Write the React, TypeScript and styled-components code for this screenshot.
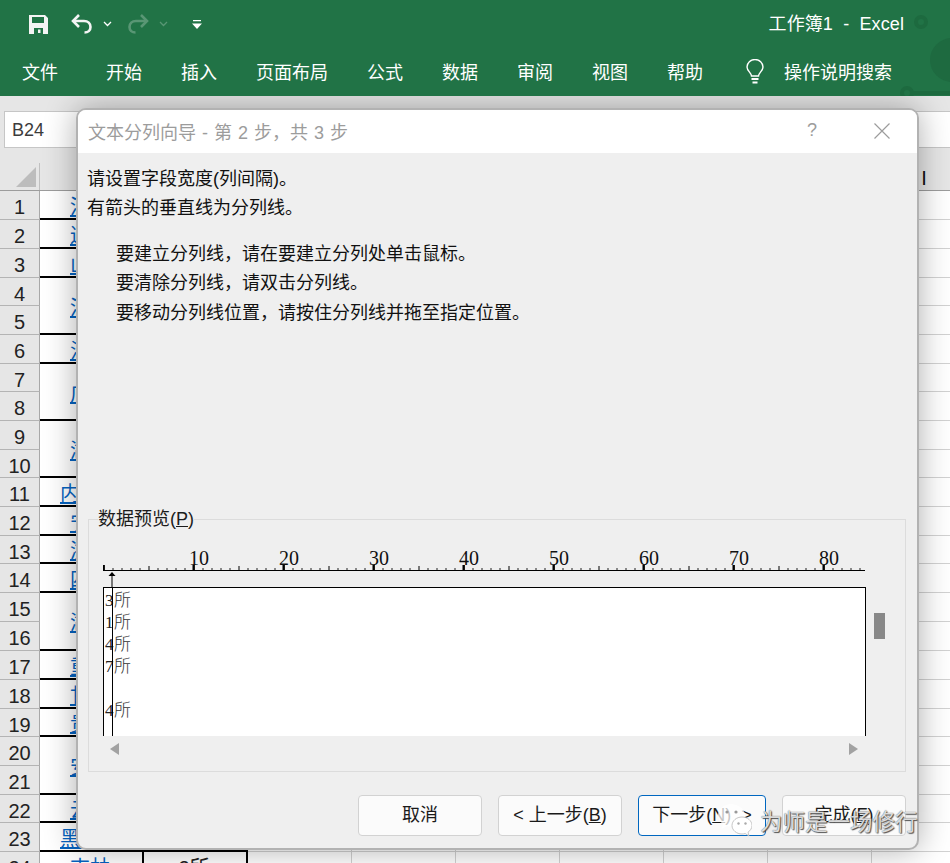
// App.tsx
import React from "react";
import styled, { createGlobalStyle } from "styled-components";

const GlobalStyle = createGlobalStyle`
  html, body {
    margin: 0;
    padding: 0;
    background: #fff;
  }
  * {
    box-sizing: border-box;
  }
`;

const FONT = `"Liberation Sans", "Noto Sans CJK SC", sans-serif`;
const HEAD_BG = "#e6e6e6";

const Page = styled.div`
  position: relative;
  width: 950px;
  height: 863px;
  overflow: hidden;
  font-family: ${FONT};
  background: #fff;
`;

/* ribbon */
const Ribbon = styled.header`
  position: relative;
  z-index: 3;
  height: 96px;
  background: #217346;
  color: #fff;
  overflow: hidden;
`;

const TitleRow = styled.div`
  display: flex;
  align-items: center;
  height: 48px;
  padding-left: 29px;
`;

const QatIcon = styled.svg<{ $left?: number }>`
  display: block;
  flex: none;
  margin-left: ${(p) => p.$left ?? 0}px;
`;

const BookTitle = styled.div`
  margin-left: auto;
  margin-right: 46px;
  padding-bottom: 4px;
  font-size: 18px;
  letter-spacing: 0.1px;
  white-space: pre;
`;

const TabRow = styled.nav`
  display: flex;
  align-items: center;
  gap: 39px;
  height: 48px;
  padding-left: 22px;
  padding-bottom: 2px;
  font-size: 18px;
`;

const Tab = styled.span<{ $extra?: number }>`
  margin-right: ${(p) => p.$extra ?? 0}px;
  white-space: nowrap;
`;

const TellMe = styled.span`
  display: flex;
  align-items: center;
  gap: 20px;
  margin-left: 4px;
  white-space: nowrap;
`;

const RibbonArt = styled.svg`
  position: absolute;
  right: 0;
  top: 0;
  pointer-events: none;
`;

/* formula bar */
const FormulaBar = styled.div`
  display: flex;
  height: 52px;
  padding: 15px 0 0 4px;
  background: ${HEAD_BG};
`;

const NameBox = styled.div`
  width: 100px;
  padding-left: 7px;
  font-size: 18px;
  line-height: 37px;
  color: #3c3c3c;
  background: #fff;
  border: 1px solid #c6c6c6;
`;

const FormulaInput = styled.div`
  flex: 1;
  background: #fff;
  border: 1px solid #c6c6c6;
  border-right: 0;
`;

/* sheet */
const HeaderStrip = styled.div`
  display: flex;
  align-items: flex-end;
  height: 43px;
  background: ${HEAD_BG};
  border-bottom: 1px solid #9c9c9c;
`;

const Corner = styled.div`
  flex: none;
  display: flex;
  align-items: flex-end;
  justify-content: flex-end;
  width: 40px;
  height: 27px;
  padding: 0 3px 3px 0;
  border-right: 1px solid #c0c0c0;

  &::after {
    content: "";
    width: 20px;
    height: 20px;
    background: #bdbdbd;
    clip-path: polygon(100% 0, 100% 100%, 0 100%);
  }
`;

const ColHead = styled.div`
  flex: none;
  width: 104px;
  height: 27px;
  font-size: 20px;
  line-height: 30px;
  text-align: center;
  color: #111;
`;

const Sheet = styled.div<{ $rows: string }>`
  display: grid;
  grid-template-columns: 40px repeat(9, 104px);
  grid-template-rows: ${(p) => p.$rows};
`;

const RowHead = styled.div`
  font-size: 20px;
  text-align: center;
  line-height: 32px;
  color: #222;
  background: ${HEAD_BG};
  border-right: 1px solid #a8a8a8;
  border-bottom: 1px solid #b4b4b4;
`;

const DataCell = styled.div<{ $span: number; $link?: boolean }>`
  grid-row: span ${(p) => p.$span};
  display: flex;
  align-items: center;
  justify-content: center;
  padding: 1px 2px 0 0;
  font-size: 20px;
  color: ${(p) => (p.$link ? "#0563c1" : "#222")};
  text-decoration: ${(p) => (p.$link ? "underline" : "none")};
  border-right: 2px solid #000;
  border-bottom: 2px solid #000;
`;

const Cell = styled.div`
  border-right: 1px solid #d2d2d2;
  border-bottom: 1px solid #d2d2d2;
`;

/* dialog */
const Dialog = styled.section`
  position: absolute;
  z-index: 2;
  left: 76px;
  top: 108px;
  width: 843px;
  height: 742px;
  display: flex;
  flex-direction: column;
  background: #efefef;
  border: 2px solid #b2b2b2;
  border-radius: 10px;
  box-shadow: 0 0 32px rgba(0, 0, 0, 0.32);
  overflow: hidden;
`;

const DialogTitle = styled.div`
  flex: none;
  display: flex;
  align-items: center;
  height: 43px;
  padding: 0 0 2px 10px;
  background: #fff;
  font-size: 18px;
  word-spacing: 1px;
  color: #9c9c9c;
  white-space: pre;
`;

const HelpMark = styled.span`
  margin-left: auto;
  margin-right: 57px;
`;

const CloseIcon = styled.svg`
  margin-right: 27px;
`;

const DialogBody = styled.div`
  flex: 1;
  display: flex;
  flex-direction: column;
  padding: 11.5px 11px 12px 9px;
  font-size: 18px;
  line-height: 29.5px;
  color: #111;
`;

const Line = styled.div``;

const HintList = styled.div`
  margin-top: 16px;
  padding-left: 29px;
`;

const PreviewGroup = styled.fieldset`
  flex: none;
  margin: auto 0 0 1px;
  padding: 0 0 0 14px;
  height: 264px;
  border: 1px solid #dcdcdc;
`;

const PreviewLegend = styled.legend`
  margin-left: -5px;
  padding: 0;
  font-size: 18px;
  line-height: 22px;
  color: #1c1c1c;
`;

const Hot = styled.span`
  text-decoration: underline;
`;

const Ruler = styled.svg`
  display: block;
  margin-top: 18px;
`;

const PreviewRow = styled.div`
  display: flex;
  align-items: flex-start;
`;

const PreviewPane = styled.div`
  position: relative;
  flex: none;
  width: 763px;
  height: 149px;
  padding-top: 2px;
  background: #fff;
  border: 1px solid #000;
  border-bottom: 0;
  overflow: hidden;
`;

const BreakLine = styled.div`
  position: absolute;
  left: 8px;
  top: 0;
  bottom: 0;
  width: 1px;
  background: #000;
`;

const PreviewLine = styled.div`
  display: flex;
  height: 22px;
  padding-left: 1px;
  line-height: 22px;
  color: #222;
`;

const PreviewDigit = styled.span`
  width: 9px;
  font-family: "Liberation Serif", serif;
  font-size: 17px;
`;

const PreviewWord = styled.span`
  font-size: 17px;
  font-weight: 300;
  color: #333;
`;

const VThumb = styled.div`
  flex: none;
  width: 11px;
  height: 26px;
  margin: 26px 0 0 8px;
  background: #888;
`;

const HScroll = styled.div`
  display: flex;
  align-items: center;
  justify-content: space-between;
  width: 763px;
  height: 25px;
  padding: 0 8px 0 7px;
`;

const Footer = styled.div`
  flex: none;
  display: flex;
  justify-content: flex-end;
  gap: 16px;
  margin-top: 23px;
`;

const Btn = styled.div<{ $primary?: boolean; $w?: number }>`
  display: flex;
  align-items: center;
  justify-content: center;
  width: ${(p) => p.$w ?? 124}px;
  height: 41px;
  font-size: 18px;
  color: #1a1a1a;
  white-space: pre;
  background: #fbfbfb;
  border: 1px solid ${(p) => (p.$primary ? "#0067c0" : "#d2d2d2")};
  border-radius: 4px;
`;

/* watermark */
const Watermark = styled.div`
  position: absolute;
  z-index: 4;
  left: 718px;
  top: 802px;
  display: flex;
  align-items: center;
  gap: 8px;
  font-size: 22.5px;
  color: rgba(255, 255, 255, 0.82);
  text-shadow: 0 0 1px #333, 1px 1px 1px #555;
  white-space: nowrap;
`;

const WatermarkIcon = styled.svg`
  flex: none;
  display: block;
`;

const ROW_HEIGHTS = [29, 29, 29, 28, 29, 29, 28, 29, 29, 28, 29, 29, 28, 29, 29, 29, 29, 29, 28, 29, 29, 28, 29, 29];

const REGIONS: { row: number; span: number; name: string; count?: string }[] = [
  { row: 1, span: 1, name: "河北", count: "3所" },
  { row: 2, span: 1, name: "辽宁", count: "1所" },
  { row: 3, span: 1, name: "山东", count: "4所" },
  { row: 4, span: 2, name: "河南", count: "7所" },
  { row: 6, span: 1, name: "江苏", count: "4所" },
  { row: 7, span: 2, name: "广东" },
  { row: 9, span: 2, name: "湖北" },
  { row: 11, span: 1, name: "内蒙古" },
  { row: 12, span: 1, name: "宁夏" },
  { row: 13, span: 1, name: "浙江" },
  { row: 14, span: 1, name: "四川" },
  { row: 15, span: 2, name: "湖南" },
  { row: 17, span: 1, name: "重庆" },
  { row: 18, span: 1, name: "甘肃" },
  { row: 19, span: 1, name: "贵州" },
  { row: 20, span: 2, name: "安徽" },
  { row: 22, span: 1, name: "云南" },
  { row: 23, span: 1, name: "黑龙江" },
  { row: 24, span: 1, name: "吉林", count: "2所" },
];

const TABS = ["开始", "插入", "页面布局", "公式", "数据", "审阅", "视图", "帮助"];
const COLUMNS = ["A", "B", "C", "D", "E", "F", "G", "H", "I"];
const PREVIEW = [
  ["3", "所"],
  ["1", "所"],
  ["4", "所"],
  ["7", "所"],
  ["", ""],
  ["4", "所"],
];

const Chevron = ({ dim, left }: { dim?: boolean; left: number }) => (
  <QatIcon $left={left} width="9" height="6" viewBox="0 0 9 6" opacity={dim ? 0.25 : 1}>
    <path d="M1 1l3.5 3.5L8 1" fill="none" stroke="#fff" strokeWidth="1.3" />
  </QatIcon>
);

const RulerDrawing = () => {
  const ticks = [];
  for (let i = 0; i <= 84; i++) {
    const x = i * 9 + 0.5;
    if (i % 10 === 0) ticks.push(<rect key={i} x={x - 1} y={17} width={2.4} height={5} fill="#000" />);
    else if (i % 5 === 0) ticks.push(<rect key={i} x={x} y={18} width={1} height={4} fill="#000" />);
    else ticks.push(<rect key={i} x={x} y={20} width={1} height={2} fill="#222" />);
  }
  return (
    <Ruler width="764" height="39" viewBox="0 0 764 39">
      {[10, 20, 30, 40, 50, 60, 70, 80].map((n) => (
        <text key={n} x={n * 9 - 4} y={17} fontFamily="Liberation Serif, serif" fontSize="20" fill="#111">
          {n}
        </text>
      ))}
      {ticks}
      <rect x="0" y="22" width="762" height="1" fill="#000" />
      <path d="M9 24l3.5 4h-7z" fill="#000" />
      <rect x="8.5" y="27" width="1" height="12" fill="#000" />
    </Ruler>
  );
};

const App: React.FC = () => {
  return (
    <Page>
      <GlobalStyle />
      <Ribbon>
        <RibbonArt width="60" height="96" viewBox="0 0 60 96">
          <circle cx="31" cy="22" r="5" fill="none" stroke="#1d6a3f" strokeWidth="4" />
          <circle cx="62" cy="60" r="22" fill="#1e6a40" />
          <circle cx="17" cy="93" r="5" fill="none" stroke="#1d6a3f" strokeWidth="4" />
          <path d="M22 93h38" stroke="#1d6a3f" strokeWidth="4" />
        </RibbonArt>
        <TitleRow>
          <QatIcon width="19" height="19" viewBox="0 0 19 19">
            <path
              fillRule="evenodd"
              fill="#f4f4f4"
              d="M0 0h16l3 3v16H0zM3 2v6h12V2zM5 13v6h9v-6zM9 14.5h2.5V18H9z"
            />
          </QatIcon>
          <QatIcon $left={23} width="22" height="20" viewBox="0 0 22 20">
            <path d="M8 1L2 7l6 6" fill="none" stroke="#f4f4f4" strokeWidth="2.6" />
            <path d="M3 7h10c4 0 6.500 2.500 6.500 6s-2.500 5.500-6 5.500" fill="none" stroke="#f4f4f4" strokeWidth="2.6" />
          </QatIcon>
          <Chevron left={10} />
          <QatIcon $left={15} width="22" height="20" viewBox="0 0 22 20" opacity={0.25}>
            <path d="M14 1l6 6-6 6" fill="none" stroke="#fff" strokeWidth="2.6" />
            <path d="M19 7H9c-4 0-6.500 2.500-6.500 6s2.500 5.500 6 5.500" fill="none" stroke="#fff" strokeWidth="2.6" />
          </QatIcon>
          <Chevron dim left={10} />
          <QatIcon $left={24} width="10" height="9" viewBox="0 0 10 9">
            <path d="M1 0h8v1.300H1zM0 3.500h10L5 9z" fill="#fff" />
          </QatIcon>
          <BookTitle>工作簿1  -  Excel</BookTitle>
        </TitleRow>
        <TabRow>
          <Tab $extra={9}>文件</Tab>
          {TABS.map((t) => (
            <Tab key={t}>{t}</Tab>
          ))}
          <TellMe>
            <svg width="18" height="25" viewBox="0 0 18 25" fill="none" stroke="#fff" strokeWidth="1.4">
              <path d="M5.500 17c0-3-4.500-5-4.500-9a8 7.500 0 0 1 16 0c0 4-4.500 6-4.500 9z" />
              <path d="M5.500 20h7M6.500 23.500h5" strokeWidth="2" />
            </svg>
            操作说明搜索
          </TellMe>
        </TabRow>
      </Ribbon>

      <FormulaBar>
        <NameBox>B24</NameBox>
        <FormulaInput />
      </FormulaBar>

      <HeaderStrip>
        <Corner />
        {COLUMNS.map((c) => (
          <ColHead key={c}>{c}</ColHead>
        ))}
      </HeaderStrip>

      <Sheet $rows={ROW_HEIGHTS.map((h) => `${h}px`).join(" ")}>
        {ROW_HEIGHTS.map((_, i) => {
          const row = i + 1;
          const region = REGIONS.find((r) => r.row === row);
          return (
            <React.Fragment key={row}>
              <RowHead>{row}</RowHead>
              {region && (
                <>
                  <DataCell $span={region.span} $link>
                    {region.name}
                  </DataCell>
                  <DataCell $span={region.span}>{region.count}</DataCell>
                </>
              )}
              {COLUMNS.slice(2).map((c) => (
                <Cell key={c} />
              ))}
            </React.Fragment>
          );
        })}
      </Sheet>

      <Dialog>
        <DialogTitle>
          文本分列向导 - 第 2 步，共 3 步
          <HelpMark>?</HelpMark>
          <CloseIcon width="16" height="16" viewBox="0 0 16 16">
            <path d="M0.500 0.500l15 15M15.500 0.500l-15 15" stroke="#9c9c9c" strokeWidth="1.2" fill="none" />
          </CloseIcon>
        </DialogTitle>
        <DialogBody>
          <Line>请设置字段宽度(列间隔)。</Line>
          <Line>有箭头的垂直线为分列线。</Line>
          <HintList>
            <Line>要建立分列线，请在要建立分列处单击鼠标。</Line>
            <Line>要清除分列线，请双击分列线。</Line>
            <Line>要移动分列线位置，请按住分列线并拖至指定位置。</Line>
          </HintList>
          <PreviewGroup>
            <PreviewLegend>
              数据预览(<Hot>P</Hot>)
            </PreviewLegend>
            <RulerDrawing />
            <PreviewRow>
              <PreviewPane>
                <BreakLine />
                {PREVIEW.map(([digit, word], i) => (
                  <PreviewLine key={i}>
                    <PreviewDigit>{digit}</PreviewDigit>
                    <PreviewWord>{word}</PreviewWord>
                  </PreviewLine>
                ))}
              </PreviewPane>
              <VThumb />
            </PreviewRow>
            <HScroll>
              <svg width="9" height="12" viewBox="0 0 9 12">
                <path d="M9 0v12L0 6z" fill="#a2a2a2" />
              </svg>
              <svg width="9" height="12" viewBox="0 0 9 12">
                <path d="M0 0v12l9-6z" fill="#a2a2a2" />
              </svg>
            </HScroll>
          </PreviewGroup>
          <Footer>
            <Btn>取消</Btn>
            <Btn>
              {"< 上一步("}
              <Hot>B</Hot>)
            </Btn>
            <Btn $primary $w={128}>
              {"下一步("}
              <Hot>N</Hot>
              {")  >"}
            </Btn>
            <Btn>
              完成(<Hot>F</Hot>)
            </Btn>
          </Footer>
        </DialogBody>
      </Dialog>

      <Watermark>
        <WatermarkIcon width="34" height="36" viewBox="0 0 34 36">
          <path d="M13 2C6 2 0 7 0 13.500c0 3.500 2 6.500 5 8.500l-1.500 5 5.500-3c1.500.4 2.800.6 4 .6C20 24.600 27 19.500 27 13.500 27 7 20 2 13 2z" fill="#fff" fillOpacity="0.75" />
          <circle cx="9" cy="10" r="1.600" fill="#999" />
          <circle cx="18" cy="10" r="1.600" fill="#999" />
          <path d="M24 15c-5.500 0-10 3.800-10 8.500s4.500 8.500 10 8.500c1.200 0 2.200-.2 3.200-.5l3.800 2.500-1-3.800c2.400-1.600 4-4 4-6.700 0-4.700-4.500-8.500-10-8.500z" fill="#fff" stroke="#b8b8b8" strokeWidth="0.8" />
          <circle cx="20.500" cy="21.500" r="1.200" fill="#aaa" />
          <circle cx="27.500" cy="21.500" r="1.200" fill="#aaa" />
        </WatermarkIcon>
        为师是一场修行
      </Watermark>
    </Page>
  );
};

export default App;
